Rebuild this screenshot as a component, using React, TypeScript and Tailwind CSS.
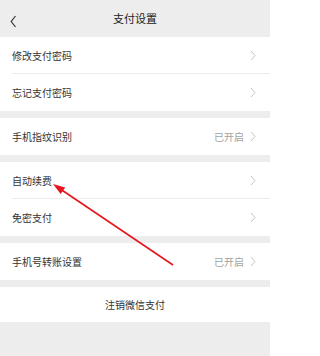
const groups = [
  [{ name: "修改支付密码" }, { name: "忘记支付密码" }],
  [{ name: "手机指纹识别", value: "已开启" }],
  [{ name: "自动续费" }, { name: "免密支付" }],
  [{ name: "手机号转账设置", value: "已开启" }],
];

type Item = { name: string; value?: string };

const Chevron = () => (
  <svg width="6" height="11" viewBox="0 0 6 11" className="shrink-0">
    <polyline points="1,1 5,5.5 1,10" fill="none" stroke="#c4c4c4" strokeWidth="1" />
  </svg>
);

const Row = ({ item, last }: { item: Item; last: boolean }) => (
  <div className="bg-white pl-3">
    <div
      className={`flex h-[37px] items-center pr-[14px] ${
        last ? "" : "border-b border-[#ececec]"
      }`}
    >
      <span className="flex-1 text-[10px] text-[#333]">{item.name}</span>
      {item.value && (
        <span className="mr-[6px] text-[10px] text-[#a3a3a3]">{item.value}</span>
      )}
      <Chevron />
    </div>
  </div>
);

export default function App() {
  return (
    <div
      className="relative h-[356px] w-[270px] overflow-hidden bg-[#ededed]"
      style={{ fontFamily: '"Noto Sans CJK SC", "Noto Sans", sans-serif' }}
    >
      {/* Header */}
      <div className="relative flex h-[37px] items-center justify-center">
        <svg
          className="absolute left-[10px] top-[15px]"
          width="7"
          height="13"
          viewBox="0 0 7 13"
        >
          <polyline points="5.5,1 1.2,6.5 5.5,12" fill="none" stroke="#333" strokeWidth="1.2" />
        </svg>
        <span className="text-[11px] text-[#222]">支付设置</span>
      </div>

      <div className="flex flex-col gap-[7px]">
        {groups.map((g, gi) => (
          <div key={gi} className="flex flex-col">
            {g.map((item, i) => (
              <Row key={item.name} item={item} last={i === g.length - 1} />
            ))}
          </div>
        ))}
        <div className="flex h-[35px] items-center justify-center bg-white text-[10px] text-[#333]">
          注销微信支付
        </div>
      </div>

      {/* Annotation arrow */}
      <svg
        className="pointer-events-none absolute left-0 top-0"
        width="270"
        height="356"
        viewBox="0 0 270 356"
      >
        <line x1="173" y1="265" x2="61" y2="189.5" stroke="#e5161d" strokeWidth="1.6" />
        <polygon points="53,184 65.2,187.4 60.7,194" fill="#e5161d" />
      </svg>
    </div>
  );
}
